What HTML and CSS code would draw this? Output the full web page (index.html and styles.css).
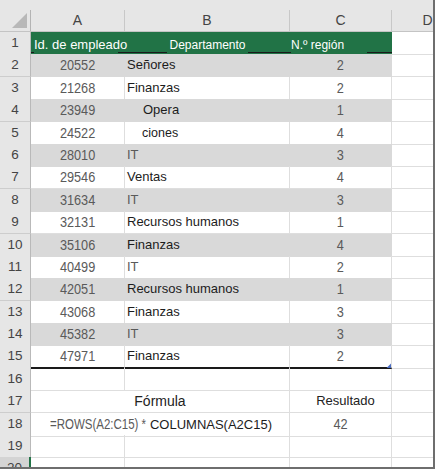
FILE: index.html
```html
<!DOCTYPE html>
<html lang="es">
<head>
<meta charset="utf-8">
<title>Hoja</title>
<link rel="stylesheet" href="styles.css">
</head>
<body>
<div class="sheet">
  <div class="row head">
    <div class="hc corner"><svg class="tri" width="30" height="21" viewBox="0 0 30 21"><polygon points="27,3 27,18 12,18" fill="#b8b8b8"/></svg></div>
    <div class="hc">A</div>
    <div class="hc">B</div>
    <div class="hc">C</div>
    <div class="hc">D</div>
  </div>

  <div class="row">
    <div class="rn">1</div>
    <div class="titlebar">
      <span class="t-id">Id. de empleado</span>
      <span class="t-dep">Departamento</span>
      <span class="t-reg">N.º región</span>
    </div>
    <div class="c d"></div>
  </div>

  <div class="row band"><div class="rn">2</div><div class="c t a"><span class="n">20552</span></div><div class="c t b">Señores</div><div class="c t cc"><span class="n">2</span></div><div class="c d"></div></div>
  <div class="row"><div class="rn">3</div><div class="c t a"><span class="n">21268</span></div><div class="c t b">Finanzas</div><div class="c t cc"><span class="n">2</span></div><div class="c d"></div></div>
  <div class="row band"><div class="rn">4</div><div class="c t a"><span class="n">23949</span></div><div class="c t b ind">Opera</div><div class="c t cc"><span class="n">1</span></div><div class="c d"></div></div>
  <div class="row"><div class="rn">5</div><div class="c t a"><span class="n">24522</span></div><div class="c t b ind sm">ciones</div><div class="c t cc"><span class="n">4</span></div><div class="c d"></div></div>
  <div class="row band"><div class="rn">6</div><div class="c t a"><span class="n">28010</span></div><div class="c t b gr">IT</div><div class="c t cc"><span class="n">3</span></div><div class="c d"></div></div>
  <div class="row"><div class="rn">7</div><div class="c t a"><span class="n">29546</span></div><div class="c t b">Ventas</div><div class="c t cc"><span class="n">4</span></div><div class="c d"></div></div>
  <div class="row band"><div class="rn">8</div><div class="c t a"><span class="n">31634</span></div><div class="c t b gr">IT</div><div class="c t cc"><span class="n">3</span></div><div class="c d"></div></div>
  <div class="row"><div class="rn">9</div><div class="c t a"><span class="n">32131</span></div><div class="c t b">Recursos humanos</div><div class="c t cc"><span class="n">1</span></div><div class="c d"></div></div>
  <div class="row band"><div class="rn">10</div><div class="c t a"><span class="n">35106</span></div><div class="c t b">Finanzas</div><div class="c t cc"><span class="n">4</span></div><div class="c d"></div></div>
  <div class="row"><div class="rn">11</div><div class="c t a"><span class="n">40499</span></div><div class="c t b gr">IT</div><div class="c t cc"><span class="n">2</span></div><div class="c d"></div></div>
  <div class="row band"><div class="rn">12</div><div class="c t a"><span class="n">42051</span></div><div class="c t b">Recursos humanos</div><div class="c t cc"><span class="n">1</span></div><div class="c d"></div></div>
  <div class="row"><div class="rn">13</div><div class="c t a"><span class="n">43068</span></div><div class="c t b">Finanzas</div><div class="c t cc"><span class="n">3</span></div><div class="c d"></div></div>
  <div class="row band"><div class="rn">14</div><div class="c t a"><span class="n">45382</span></div><div class="c t b gr">IT</div><div class="c t cc"><span class="n">3</span></div><div class="c d"></div></div>
  <div class="row last"><div class="rn">15</div><div class="c t a"><span class="n">47971</span></div><div class="c t b">Finanzas</div><div class="c t cc handle"><span class="n">2</span></div><div class="c d"></div></div>

  <div class="row"><div class="rn">16</div><div class="c"></div><div class="c"></div><div class="c"></div><div class="c d"></div></div>
  <div class="row"><div class="rn">17</div><div class="c merged lbl">Fórmula</div><div class="c res">Resultado</div><div class="c d"></div></div>
  <div class="row"><div class="rn">18</div><div class="c merged formula"><span class="f1">=ROWS(A2:C15) * </span><span class="f2">COLUMNAS(A2C15)</span></div><div class="c cc"><span class="n">42</span></div><div class="c d"></div></div>
  <div class="row"><div class="rn">19</div><div class="c"></div><div class="c"></div><div class="c"></div><div class="c d"></div></div>
  <div class="row"><div class="rn sel">20</div><div class="c"></div><div class="c"></div><div class="c"></div><div class="c d"></div></div>
</div>
</body>
</html>
```
FILE: styles.css
```css
* { box-sizing: border-box; }
html, body { margin: 0; padding: 0; background: #fff; }
body { font-family: "Liberation Sans", Arial, sans-serif; }

.sheet {
  width: 435px;
  height: 469px;
  border-right: 2px solid #6e6e6e;
  border-bottom: 2px solid #6e6e6e;
  overflow: hidden;
  background: #fff;
}

.row {
  display: grid;
  grid-template-columns: 31px 94px 165px 102px 72px;
  height: 22.4px;
  white-space: nowrap;
}

/* column headers */
.head {
  height: 32px;
  background: #e6e6e6;
  border-bottom: 1px solid #c4c4c4;
  padding-top: 10px;
}
.hc {
  height: 21px;
  border-right: 1px solid #c8c8c8;
  text-align: center;
  font-size: 14px;
  line-height: 21px;
  color: #444;
}
.corner { border-right-color: #b4b4b4; }
.tri { display: block; }

/* row numbers */
.rn {
  background: #e6e6e6;
  border-right: 1px solid #b9b9b9;
  border-bottom: 1px solid #cdcdcd;
  text-align: center;
  font-size: 13.5px;
  line-height: 22px;
  color: #444;
}
.rn.sel {
  background: #d4d4d4;
  border-right: 2px solid #217346;
}

/* title row */
.titlebar {
  grid-column: 2 / 5;
  display: grid;
  grid-template-columns: 94px 165px 102px;
  align-items: center;
  background-color: #217346;
  background-image:
    linear-gradient(#1a1a1a, #1a1a1a),
    linear-gradient(#1a1a1a, #1a1a1a),
    linear-gradient(#1a1a1a, #1a1a1a),
    linear-gradient(#1a1a1a, #1a1a1a);
  background-repeat: no-repeat;
  background-size: 3px 1px, 49px 1px, 43px 1px, 25px 1px;
  background-position: 0 20px, 87px 20px, 217px 20px, 336px 20px;
  color: #fff;
  padding-top: 2px;
}
.t-id { font-size: 13px; padding-left: 3px; }
.t-dep { font-size: 12px; text-align: center; }
.t-reg { font-size: 12px; padding-left: 1px; }

/* cells */
.c {
  border-right: 1px solid #dedede;
  border-bottom: 1px solid #dedede;
  line-height: 22px;
  overflow: visible;
}
.band .t {
  background: #d9d9d9;
  border-color: #d9d9d9;
}
.a, .cc {
  font-size: 15.5px;
  color: #5a5a5a;
  text-align: center;
}
.n {
  display: inline-block;
  transform: scaleX(0.82);
}
.b {
  font-size: 13px;
  color: #1c1c1c;
  padding-left: 2px;
}
.b.gr { color: #5a5a5a; }
.b.ind { padding-left: 18px; }
.b.sm { font-size: 12.5px; padding-left: 17px; }

.last .t { border-bottom: 2px solid #1a1a1a; }
.handle { position: relative; }
.handle::after {
  content: "";
  position: absolute;
  right: 0;
  bottom: -1px;
  width: 5px;
  height: 5px;
  background: #4a6cc0;
  clip-path: polygon(100% 0, 100% 100%, 0 100%);
}

/* summary */
.merged { grid-column: 2 / 4; text-align: center; }
.lbl { font-size: 14px; color: #222; }
.res { font-size: 13px; color: #222; text-align: center; padding-left: 10px; }
.formula { padding-left: 2px; }
.f1 {
  display: inline-block;
  font-size: 14px;
  color: #5a5a5a;
  white-space: pre;
  transform: scaleX(0.82);
  transform-origin: left center;
  margin-right: -21px;
}
.f2 { font-size: 13px; color: #1c1c1c; }
```
